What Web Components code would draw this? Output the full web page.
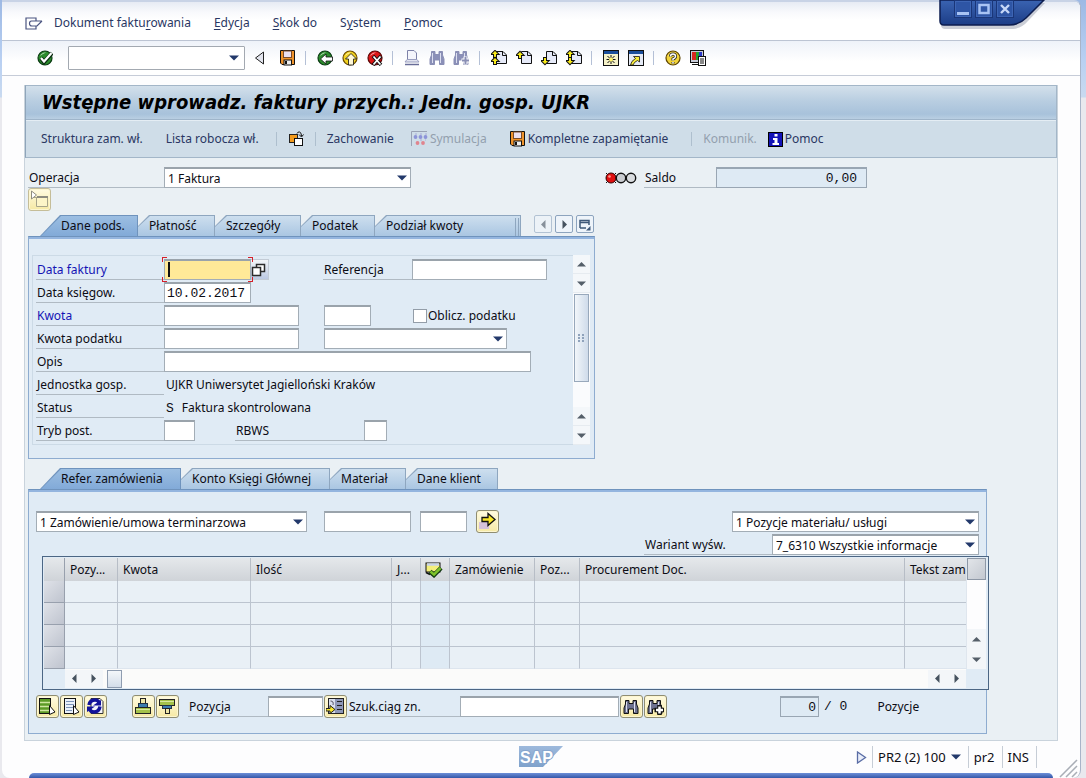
<!DOCTYPE html>
<html lang="pl">
<head>
<meta charset="utf-8">
<title>Wstępne wprowadz. faktury przych.</title>
<style>
  html, body { margin: 0; height: 100%; }
  body {
    font-family: "Noto Sans", "Open Sans", sans-serif;
    font-size: 12px;
    line-height: 20px;
    color: #0c0c14;
    background: linear-gradient(#9db9e4 0, #b9d0f2 60px, #c9daf0 97px, #e9e9ee 98px);
    --navy: #2a3763;
  }
</style>
</head>
<body>
<sap-window>
  <sap-window-controls slot="controls"></sap-window-controls>
  <sap-menubar slot="menu"></sap-menubar>
  <sap-toolbar slot="toolbar"></sap-toolbar>

  <sap-titlebar slot="title" heading="Wstępne wprowadz. faktury przych.: Jedn. gosp. UJKR"></sap-titlebar>

  <sap-operation></sap-operation>

  <sap-tabpanel class="header" overflow
      tabs="Dane pods.:98|Płatność:77|Szczegóły:86|Podatek:74|Podział kwoty:146">
    <sap-basic-data></sap-basic-data>
  </sap-tabpanel>

  <sap-tabpanel class="items"
      tabs="Refer. zamówienia:141|Konto Księgi Głównej:149|Materiał:76|Dane klient:92">
    <sap-items></sap-items>
  </sap-tabpanel>

  <sap-statusbar slot="status"></sap-statusbar>
</sap-window>

<script>
const page = `<path d="M5.500 8V1.500H12L15.500 5V13.500H5.500Z" fill="#e6eaf8" stroke="#111"/><path d="M11.500 1.500V5.500H15.500" fill="none" stroke="#111"/>`;
const arrow = d => `<path d="${d}" fill="#f8ea1a" stroke="#111" stroke-width="2" paint-order="stroke"/>`;
const up = y => arrow(`M4 ${y}L7 ${y+3}H5V${y+6}H3V${y+3}H1Z`);
const down = y => arrow(`M4 ${y+6}L7 ${y+3}H5V${y}H3V${y+3}H1Z`);
const binoc = (body, edge) => `<path d="M2.500 1.500H6V4.500H10V1.500H13.500V5L15 9V14.500H10.500V10H5.500V14.500H1V9L2.500 5Z" fill="${body}" stroke="${edge}"/><path d="M3.500 3V13M11.500 3V13" stroke="#dcdff0"/>`;
const disk = `<path d="M.5 .5H14.500V14.500H2L.5 13Z" fill="#f0932b" stroke="#111"/><rect x="3.500" y="1" width="8" height="6.500" fill="#eadff0" stroke="#7a4b28"/><rect x="4" y="10" width="7.500" height="5" fill="#eee" stroke="#111"/><rect x="5" y="11" width="2" height="3" fill="#111"/>`;
const ball = (c, d) => `<circle cx="8" cy="8" r="7" fill="${c}" stroke="${d}" stroke-width="1.200"/><path d="M3 6Q5 2 9 2.500Q5 4 3 6Z" fill="#fff" opacity=".7"/>`;
const ICONS = {
  menu: [18, 13, `<path d="M11 4.500V1H1V12H11V8.500M17 4H6.500Q4.500 4 4.500 6.500T7 9H12L17 4" fill="none" stroke="#4a5480" stroke-width="1.200"/>`],
  ok: [16, 16, ball('#2c8c2c', '#0a3a12') + `<path d="M4 8L7 12L15 3" fill="none" stroke="#0a2a10" stroke-width="4"/><path d="M4 8L7 11.500L14.500 3" fill="none" stroke="#fff" stroke-width="2.200"/>`],
  back: [16, 16, ball('#2c8c2c', '#0a3a12') + `<path d="M3.500 9L9 4V7H15.500V11H9V14Z" fill="#fff" stroke="#111" stroke-width=".8"/>`],
  exit: [16, 16, ball('#f2d21f', '#6b4a00') + `<path d="M9 3.500L14.500 9H11.500V15H6.500V9H3.500Z" fill="#fff8d8" stroke="#111" stroke-width=".8"/>`],
  cancel: [16, 16, ball('#dd1717', '#5a0505') + `<path d="M6 6L14 15M14 6L6 15" stroke="#111" stroke-width="3.400"/><path d="M6.500 6.500L13.500 14.500M13.500 6.500L6.500 14.500" stroke="#fff" stroke-width="1.800"/>`],
  prev: [11, 14, `<path d="M9.500 1V13L1.500 7Z" fill="#e3e5ee" stroke="#222"/>`],
  save: [16, 16, disk],
  print: [16, 16, `<path d="M3.500 9V.5H10L12.500 3V9" fill="#f4f5fb" stroke="#7d82a8"/><path d="M3 9.500H13L15 12H1Z" fill="#e2e4f0" stroke="#9a9fc0"/><path d="M1 14.500H15" stroke="#686d98" stroke-width="1.500"/>`],
  find: [16, 16, binoc('#8b90b8', '#8a8fb5')],
  findnext: [17, 16, binoc('#8b90b8', '#8a8fb5') + `<path d="M12.500 6.500V14.500M8.500 10.500H16.500" stroke="#fff" stroke-width="4"/><path d="M12.500 7V14M9 10.500H16" stroke="#8a8fb5" stroke-width="2"/>`],
  bfind: [17, 16, binoc('#6d7190', '#111')],
  bfindnext: [17, 16, binoc('#6d7190', '#111') + `<path d="M12.500 6V16M7.500 11H17" stroke="#111" stroke-width="4.500"/><path d="M12.500 7.500V14.500M9 11H16" stroke="#fff" stroke-width="2.500"/>`],
  first: [16, 16, page + up(1) + up(8)],
  pgup: [16, 16, page + up(2)],
  pgdn: [16, 16, page + down(8)],
  last: [16, 16, page + up(1) + down(8)],
  session: [16, 16, `<rect x=".5" y=".5" width="15" height="15" fill="#f6f2c8" stroke="#111"/><path d="M1 2.500H15" stroke="#1c4f9c" stroke-width="3"/><path d="M8 5V14M3.500 9.500H12.500M4.500 6L11.500 13M11.500 6L4.500 13" stroke="#111"/><circle cx="8" cy="9.500" r="2" fill="#fff36a"/>`],
  shortcut: [16, 16, `<rect x=".5" y=".5" width="15" height="15" fill="#e6ebf6" stroke="#111"/><path d="M1 2.500H15" stroke="#1c4f9c" stroke-width="3"/><path d="M5.500 6.500H11.500V12L9.500 10.500Q6 12 5 15H2.500Q3 11 7.500 8.500Z" fill="#f8ec3a" stroke="#111" stroke-width=".8"/>`],
  help: [16, 16, ball('#f2d43a', '#5c4300') + `<path d="M5.500 6.500Q5.500 4 8 4T10.500 6.500Q10.500 8 8 9V10.500M8 12V13.500" fill="none" stroke="#222" stroke-width="3"/><path d="M5.500 6.500Q5.500 4 8 4T10.500 6.500Q10.500 8 8 9V10.500M8 12V13.500" fill="none" stroke="#fff" stroke-width="1.500"/>`],
  layout: [16, 16, `<rect x=".5" y=".5" width="13" height="12" fill="#c8ccd8" stroke="#111"/><rect x="2" y="2" width="4" height="8" fill="#d8281e"/><rect x="6" y="2" width="3" height="8" fill="#25a02c"/><rect x="9" y="2" width="3" height="8" fill="#2a37c8"/><path d="M2 14.500H8" stroke="#111"/><rect x="8.500" y="6.500" width="7" height="9" fill="#fff" stroke="#111"/><path d="M10 9H14M10 11H14M10 13H14" stroke="#111"/>`],
  otherdoc: [16, 16, `<rect x="1.500" y="3.500" width="8" height="8" fill="#f29a1c" stroke="#222"/><rect x="6.500" y="7.500" width="8" height="7" fill="#fff" stroke="#111"/><path d="M9 2.500Q10 .5 11.500 1Q13.500 1.500 13.500 5M11 3.500L13.500 6L15.500 3.500" fill="none" stroke="#111"/>`],
  simulate: [17, 16, `<path d="M.5 15V.5H16" fill="none" stroke="#9aa2b5"/><g fill="#8d94d8"><circle cx="4.500" cy="6" r="1.900"/><circle cx="9.500" cy="6" r="1.900"/><circle cx="14.500" cy="6" r="1.900"/></g><g fill="#e0848e"><circle cx="6.500" cy="12" r="1.900"/><circle cx="12" cy="12" r="1.900"/></g><path d="M4 3H16M9 9H15" stroke="#a9add8" stroke-dasharray="2 3"/>`],
  info: [15, 15, `<rect x=".5" y=".5" width="14" height="14" fill="#1212b8" stroke="#000"/><path d="M6.500 2H9.500V4.500H6.500ZM5 6H9.500V11H11V13H4.500V11H6.500V8H5Z" fill="#fff"/>`],
  lights: [32, 16, `<path d="M1 8H11" stroke="#111" stroke-width="2"/><path d="M1 3L11 13M11 3L1 13" stroke="#111"/><circle cx="6" cy="8" r="5" fill="#e01010" stroke="#300"/><circle cx="4.500" cy="6.500" r="1.300" fill="#ff9a90"/><circle cx="16" cy="8" r="4.700" fill="#c9ccd0" stroke="#111" stroke-width="1.400"/><circle cx="26" cy="8" r="4.700" fill="#d9dcdf" stroke="#111" stroke-width="1.400"/>`],
  tree: [19, 19, `<path d="M1.500 1V9L6.500 5Z" fill="#fff" stroke="#8d8c80"/><path d="M4 7.500H17M6.500 7V16.500H17.500V7" fill="#fdf5c8" stroke="#a8a58a"/><path d="M7 7H18" stroke="#8d8c80" stroke-width="2"/>`],
  copyout: [19, 19, `<rect x="1" y="10" width="10" height="7" fill="#d5c2dc"/><path d="M4 5.500H10V1.500L17 7.500L10 13.500V9.500H4Z" fill="#f8e528" stroke="#111" stroke-width="1.300"/>`],
  values: [18, 18, `<path d="M5.500 3.500H13.500V10.500H5.500Z" fill="#fff" stroke="#2b2b2b" stroke-width="1.500"/><path d="M1.500 6.500H9.500V14.500H1.500Z" fill="#fff" stroke="#2b2b2b" stroke-width="1.500"/>`],
  selall: [19, 19, `<rect x="1.500" y="1.500" width="11" height="15" fill="#5c9a26" stroke="#111"/><path d="M2 5.500H12M2 9.500H12M2 13.500H12" stroke="#cfe6a0" stroke-width="1.500"/><path d="M11.500 8.500V17.500L17 15Z" fill="#fff" stroke="#111"/>`],
  deselall: [19, 19, `<rect x="2.500" y="1.500" width="11" height="15" fill="#eaf1fa" stroke="#111"/><path d="M4 4.500H12M4 7.500H12M4 10.500H12M4 13.500H10" stroke="#7d95b8"/><path d="M11.500 8.500V17.500L17 15Z" fill="#fff" stroke="#111"/>`],
  refresh: [19, 19, `<path d="M5 1.500H14L17 4.500V16.500H5Z" fill="#f4f4fa" stroke="#333"/><path d="M3 8Q4 3 9 3Q12 3 13 5.500M14 9.500Q13 15 8 15Q4.500 15 3.500 12" fill="none" stroke="#12129a" stroke-width="3.500"/><path d="M7 8.500H15V3ZM9 9.500H1V15Z" fill="#12129a"/>`],
  insert: [19, 19, `<rect x="6.500" y="1.500" width="5" height="5" fill="#eee7a8" stroke="#222"/><rect x="4.500" y="6.500" width="9" height="4" fill="#3a7cb0" stroke="#234"/><rect x="1.500" y="10.500" width="15" height="6" fill="#a4c24a" stroke="#222"/><path d="M2 12.500H16" stroke="#d9e8a0"/>`],
  remove: [19, 19, `<rect x="1.500" y="2.500" width="15" height="6" fill="#a4c24a" stroke="#222"/><path d="M2 4.500H16" stroke="#d9e8a0"/><rect x="4.500" y="8.500" width="9" height="3" fill="#3a7cb0" stroke="#234"/><rect x="7.500" y="11.500" width="4" height="5" fill="#eee7a8" stroke="#222"/>`],
  position: [19, 19, `<rect x="2.500" y="1.500" width="15" height="15" fill="#8d97b8" stroke="#222"/><rect x="3" y="2" width="6" height="14" fill="#d9dfee"/><path d="M11 4.500H16M11 8.500H16M11 12.500H16" stroke="#222"/><path d="M4.500 4Q8 4 7 8" fill="none" stroke="#556"/><path d="M0 11.500H4V8.500L9 12.500L4 16.500V14H0Z" fill="#f6e528" stroke="#222"/>`],
  status: [18, 16, `<rect x="1" y="1" width="14" height="9" fill="#f4ef7a" stroke="#111"/><path d="M2 2.500H14" stroke="#c9d3e8" stroke-width="2.500"/><path d="M1 10.500L5 12.500" stroke="#111" stroke-width="1.500"/><path d="M5 9.500L9 13L16 6" fill="none" stroke="#123a12" stroke-width="4.500"/><path d="M5.500 9.500L9 12.500L15.500 6" fill="none" stroke="#7cc22a" stroke-width="2.500"/>`],
  tabmenu: [12, 13, `<path d="M1 10V2.500H5M5 2.500H10V7M1 10H7M1 4.500H10" fill="none" stroke="#3e5878" stroke-width="1.500"/><path d="M7 12.500H11.500V8Z" fill="#3e5878"/>`],
  up: [9, 5, `<path d="M0 4.500L4.500 0L9 4.500Z" fill="#555f69"/>`],
  down: [9, 5, `<path d="M0 .5H9L4.500 5Z" fill="#555f69"/>`],
  left: [5, 9, `<path d="M4.500 0V9L0 4.500Z" fill="#46525f"/>`],
  right: [5, 9, `<path d="M.5 0V9L5 4.500Z" fill="#46525f"/>`],
  drop: [10, 6, `<path d="M0 .5H10L5 5.500Z" fill="#23396b"/>`],
  play: [11, 13, `<path d="M1.500 1V12L9.500 6.500Z" fill="#e9eefa" stroke="#5a6da5" stroke-width="1.300"/>`]
};

const base = `<style>
  *, *::before, *::after { box-sizing: border-box; }
  :host { display: block; }
  :host([hidden]) { display: none; }
  button, input, select { font: inherit; color: inherit; margin: 0; }
</style>`;

function define(name, render) {
  customElements.define(name, class extends HTMLElement {
    constructor() { super(); this.attachShadow({ mode: 'open' }); }
    connectedCallback() {
      if (this.shadowRoot.childNodes.length) return;
      const t = document.createElement('template');
      t.innerHTML = base + render(this, (n, d = '') => this.getAttribute(n) ?? d);
      this.shadowRoot.append(t.content.cloneNode(true));
    }
  });
}

define('sap-icon', (el, a) => {
  const [w, h, art] = ICONS[a('name')];
  return `<style>:host{display:inline-block;width:${w}px;height:${h}px;flex:none}svg{display:block}</style>
    <svg width="${w}" height="${h}" viewBox="0 0 ${w} ${h}" aria-hidden="true">${art}</svg>`;
});

/* Square yellow push button */
define('sap-push', (el, a) => `<style>
  :host { width: 23px; height: 23px; flex: none; }
  button { display: flex; align-items: center; justify-content: center; width: 100%; height: 100%; padding: 0;
    border: 1px solid #8f8d72; border-radius: 3px; background: linear-gradient(#fffbe2, #f6e9a4);
    box-shadow: inset 0 0 0 1px #fdf6cf; }
  :host([dim]) button { border-color: #c5bd98; }
  </style><button type="button" aria-label="${a('label')}"><sap-icon name="${a('icon')}"></sap-icon></button>`);

/* Label with underline, and its input, list or output */
define('sap-field', (el, a) => {
  const kind = a('kind', 'input');
  const label = a('label');
  const aria = label ? '' : `aria-label="${a('hint')}"`;
  let control = '';
  if (kind === 'select') {
    control = `<span class="box"><select id="c" ${aria}><option>${a('value')}</option></select><sap-icon name="drop"></sap-icon></span>`;
  } else if (kind === 'output') {
    control = `<output id="c"><slot></slot></output>`;
  } else {
    control = `<span class="box"><input id="c" ${aria} type="text" value="${a('value')}" ${el.hasAttribute('readonly') ? 'readonly' : ''}>${el.hasAttribute('focused') ? '<i class="caret"></i><i class="mark"></i>' : ''}</span>`;
  }
  return `<style>
    :host { display: flex; height: 21px; flex: none; }
    label { width: ${a('lw', 0)}px; flex: none; border-bottom: 1px solid #b0bac3; padding: 1px 0 0 1px; white-space: nowrap; }
    :host([required]) label { color: #1414b4; }
    .box { position: relative; display: block; width: ${a('w', 100)}px; flex: none; }
    input, select { display: block; width: 100%; height: 21px; border: 1px solid #a3adb6; border-top: 2px solid #9aa3ab;
      border-radius: 0; background: #fff; padding: 0 2px; outline: 0; appearance: none; }
    select { padding: 0 20px 0 3px; }
    input { font: 13px/18px "Liberation Mono", monospace; }
    :host([readonly]) input { background: #deeaf4; text-align: right; padding-right: 9px; border-color: #99a6b3; }
    :host([tight]) input { padding-right: 2px; }
    :host([focused]) input { background: #ffe998; }
    .box sap-icon { position: absolute; right: 4px; top: 8px; }
    .caret { position: absolute; left: 4px; top: 3px; width: 2px; height: 15px; background: #111; }
    .mark { position: absolute; inset: -2px; 
      --r: #d6202a;
      background:
        linear-gradient(var(--r),var(--r)) 0 0/5px 1px, linear-gradient(var(--r),var(--r)) 0 0/1px 5px,
        linear-gradient(var(--r),var(--r)) 100% 0/5px 1px, linear-gradient(var(--r),var(--r)) 100% 0/1px 5px,
        linear-gradient(var(--r),var(--r)) 0 100%/5px 1px, linear-gradient(var(--r),var(--r)) 0 100%/1px 5px,
        linear-gradient(var(--r),var(--r)) 100% 100%/5px 1px, linear-gradient(var(--r),var(--r)) 100% 100%/1px 5px;
      background-repeat: no-repeat; pointer-events: none; }
    output { padding: 1px 0 0 2px; white-space: pre; }
  </style>${label ? `<label for="c">${label}</label>` : ''}${control}`;
});

define('sap-window', () => `<style>
  :host { position: relative; display: flex; flex-direction: column; min-height: 100vh; padding: 0 5px 0 2px; }
  .frame { flex: 1; display: flex; flex-direction: column; background: #fdfdfe; border-top: 2px solid #c8d3e6; border-right: 1px solid #a9b4c8; border-radius: 0 7px 8px 8px; }
  main { flex: 1; margin: 9px 22px 0 22px; background: #eaf0f4; border: 1px solid #c9d3dc; border-top: 0; }
  .work { padding: 9px 0 6px 3px; }
  .base { height: 5px; margin: 0 27px; border-radius: 12px 12px 0 0; background: linear-gradient(#6d8fd8, #3457a8); flex: none; }
  </style>
  <slot name="controls"></slot>
  <div class="frame"><slot name="menu"></slot><slot name="toolbar"></slot>
    <main><slot name="title"></slot><div class="work"><slot></slot></div></main>
    <slot name="status"></slot><div class="base"></div></div>`);

define('sap-window-controls', () => `<style>
  :host { position: absolute; top: 0; right: 40px; width: 107px; height: 32px; }
  .shape { position: absolute; inset: 0; }
  div { position: relative; display: flex; gap: 3px; padding: 0 0 0 15px; }
  button { width: 18px; height: 18px; padding: 0; border: 1px solid #1a3678; background: #2e55a5; box-shadow: inset 0 0 0 1px #3d65b4; display: flex; align-items: center; justify-content: center; }
  button svg { display: block; }
  </style>
  <svg class="shape" width="107" height="32" viewBox="0 0 107 32" aria-hidden="true">
    <defs><linearGradient id="g" x2="0" y2="1"><stop stop-color="#3a63b2"/><stop offset="1" stop-color="#1c3d86"/></linearGradient></defs>
    <path d="M2 3V26Q3 29 6 29H74Q83 28 89 21L106 3Z" fill="#8b93a5" opacity=".45"/>
    <path d="M1 0V21Q1 25 5 25H70Q80 25 87 18L105 0Z" fill="url(#g)" stroke="#0c1d50" stroke-width="1.500"/></svg>
  <div>
    <button type="button" aria-label="Minimalizuj"><svg width="12" height="12"><path d="M0 10.500H12" stroke="#a9c4f4" stroke-width="3"/></svg></button>
    <button type="button" aria-label="Maksymalizuj"><svg width="12" height="12"><rect x="1.500" y="2" width="9" height="8" fill="none" stroke="#a9c4f4" stroke-width="2.500"/></svg></button>
    <button type="button" aria-label="Zamknij"><svg width="12" height="12"><path d="M2 2L10 10M10 2L2 10" stroke="#c7d8f8" stroke-width="2.400"/></svg></button>
  </div>`);

define('sap-menubar', () => `<style>
  :host { border-bottom: 1px solid #bcc4d3; background: linear-gradient(#e6ebf4 0, #f8f9fc 10px, #fff 18px); border-radius: 0 5px 0 0; }
  nav { display: flex; align-items: center; height: 38px; padding: 4px 0 0 23px; color: var(--navy); gap: 23px; }
  button { border: 0; padding: 0; background: none; white-space: nowrap; }
  .first { margin-left: -12px; }
  u { text-underline-offset: 2px; }
  </style><nav aria-label="Menu"><sap-icon name="menu"></sap-icon>
  <button type="button" class="first">Dokument faktu<u>r</u>owania</button>
  <button type="button"><u>E</u>dycja</button><button type="button"><u>S</u>kok do</button>
  <button type="button">S<u>y</u>stem</button><button type="button"><u>P</u>omoc</button></nav>`);

define('sap-toolbar', () => {
  const b = (i, t) => `<button type="button" aria-label="${t}"><sap-icon name="${i}"></sap-icon></button>`;
  return `<style>
  :host { border-bottom: 1px solid #c6ccd8; background: linear-gradient(#eef2f9, #fff 60%); }
  div { display: flex; align-items: center; height: 34px; padding-left: 30px; }
  button { width: 25px; height: 24px; flex: none; display: flex; align-items: center; justify-content: center; border: 0; padding: 0; background: none; }
  .cmd { position: relative; width: 177px; height: 24px; margin: 0 2px 0 11px; flex: none; }
  .cmd input { width: 100%; height: 100%; border: 1px solid #a3a9b1; border-radius: 1px; background: #fff; padding: 0 24px 0 4px; outline: 0; }
  .cmd button { position: absolute; right: 0; top: 0; width: 22px; }
  .s { width: 1px; height: 14px; margin: 0 6px 0 5px; background: #b4c0d6; flex: none; }
  .wide { margin-right: 3px; }
  </style><div role="toolbar" aria-label="Standard">${b('ok', 'Enter')}
  <span class="cmd"><input type="text" aria-label="Polecenie">${b('drop', 'Historia')}</span>
  ${b('prev', 'Zwiń').replace('<button', '<button class="wide"')}${b('save', 'Zapis')}<i class="s"></i>
  ${b('back', 'Wstecz')}${b('exit', 'Koniec')}${b('cancel', 'Anulowanie')}<i class="s"></i>
  ${b('print', 'Wydruk')}${b('find', 'Szukanie')}${b('findnext', 'Szukanie dalej')}<i class="s"></i>
  ${b('first', 'Pierwsza strona')}${b('pgup', 'Poprzednia strona')}${b('pgdn', 'Następna strona')}${b('last', 'Ostatnia strona')}<i class="s"></i>
  ${b('session', 'Nowy tryb')}${b('shortcut', 'Skrót')}<i class="s"></i>
  ${b('help', 'Pomoc')}${b('layout', 'Układ lokalny')}</div>`;
});

define('sap-titlebar', (el, a) => `<style>
  :host { border: 1px solid #a3b6c8; border-left-color: #8fa5ba; }
  h1 { margin: 0; height: 34px; padding-left: 16px; font: italic bold 20px/32px "DejaVu Sans Condensed", "Noto Sans", sans-serif; color: #000;
    background: linear-gradient(#d3e0eb, #b9cee1 45%, #a8c2db 85%, #b9cfe2); border-bottom: 1px solid #9fb5ca; white-space: nowrap; }
  div { display: flex; align-items: center; height: 37px; padding-left: 15px; background: #cfdde8; border-top: 1px solid #e4edf4; color: var(--navy); }
  button { display: flex; align-items: center; gap: 2px; border: 0; padding: 0; margin-right: 23px; background: none; white-space: nowrap; height: 24px; }
  button[disabled] { color: #93a0ae; }
  .n { margin-right: 17px; }
  .t { margin-right: 11px; }
  i { width: 1px; height: 14px; background: #aebfce; margin-right: 11px; flex: none; }
  </style><h1>${a('heading')}</h1>
  <div role="toolbar" aria-label="Aplikacja">
   <button type="button">Struktura zam. wł.</button><button type="button" class="n">Lista robocza wł.</button><i></i>
   <button type="button" class="t" aria-label="Inny dokument"><sap-icon name="otherdoc"></sap-icon></button><i></i>
   <button type="button" class="n">Zachowanie</button>
   <button type="button" disabled><sap-icon name="simulate"></sap-icon>Symulacja</button>
   <button type="button"><sap-icon name="save"></sap-icon>Kompletne zapamiętanie</button><i></i>
   <button type="button" class="t" disabled>Komunik.</button>
   <button type="button"><sap-icon name="info"></sap-icon>Pomoc</button></div>`);

define('sap-operation', () => `<style>
  .row { display: flex; align-items: center; }
  .op { margin-right: 194px; }
  .bal { margin-left: 7px; }
  </style><div class="row"><sap-field class="op" kind="select" label="Operacja" lw="136" w="247" value="1 Faktura"></sap-field>
  <sap-icon name="lights"></sap-icon><sap-field class="bal" label="Saldo" lw="72" w="151" value="0,00" readonly></sap-field></div>
  <sap-push icon="tree" label="Struktura" dim></sap-push>`);

define('sap-tabpanel', (el, a) => {
  const tabs = a('tabs').split('|').map((t, i) => {
    const [n, w] = t.split(':');
    return `<button type="button" role="tab" aria-selected="${i === 0}" style="width:${w}px"><span>${n}</span></button>`;
  }).join('');
  return `<style>
  :host(.header) { width: 567px; margin-top: 4px; }
  :host(.items) { margin: 9px 70px 0 0; }
  .tabs { display: flex; height: 21px; padding-left: 12px; }
  .tabs button { position: relative; height: 21px; border: 0; padding: 0 0 0 11px; text-align: left; white-space: nowrap; flex: none;
    background: #8ea6bf; clip-path: polygon(0 100%, 0 11px, 11px 0, 100% 0, 100% 100%); }
  .tabs button::before { content: ""; position: absolute; inset: 0; background: linear-gradient(#cfe0ef, #aac6e2);
    clip-path: polygon(0 100%, 0 12px, 12px 1px, calc(100% - 1px) 1px, calc(100% - 1px) 100%); }
  .tabs button[aria-selected=true] { padding-left: 21px; background: #6f93bd; clip-path: polygon(0 100%, 20px 0, 100% 0, 100% 100%); }
  .tabs button[aria-selected=true]::before { background: linear-gradient(#9dbfe2, #82aad8); clip-path: polygon(1px 100%, 21px 1px, calc(100% - 1px) 1px, calc(100% - 1px) 100%); }
  .tabs span { position: relative; line-height: 22px; }
  :host([overflow]) .tabs button:nth-child(5)::after { content: ""; position: absolute; right: 2px; top: 3px; bottom: 0; width: 4px; border: solid #8ea6bf; border-width: 0 1px; }
  .nav { display: flex; gap: 3px; margin-left: 13px; }
  .tabs .nav button { width: 18px; height: 18px; padding: 0; display: flex; align-items: center; justify-content: center; background: #eef4fa; border: 1px solid #8da4be; border-radius: 2px; clip-path: none; }
  .tabs .nav button::before { content: none; }
  .tabs .nav button:first-child { opacity: .6; }
  .body { border: 1px solid #8eacd0; border-top: 1px solid #6f93bd; background: #e0ebf5; box-shadow: inset 0 2px #94b5df; }
  </style><div class="tabs" role="tablist">${tabs}${el.hasAttribute('overflow') ? `<div class="nav">
    <button type="button" aria-label="W lewo"><sap-icon name="left"></sap-icon></button><button type="button" aria-label="W prawo"><sap-icon name="right"></sap-icon></button>
    <button type="button" aria-label="Lista kart"><sap-icon name="tabmenu"></sap-icon></button></div>` : ''}</div>
  <div class="body"><slot></slot></div>`;
});

define('sap-basic-data', () => `<style>
  :host { display: flex; padding: 18px 4px 13px 3px; }
  form { flex: 1; border: solid #ccdae6; border-width: 1px 0 1px 1px; padding: 3px 0 3px 3px; display: grid; grid-auto-rows: 21px; row-gap: 2px; }
  .r { display: flex; }
  .help { width: 18px; padding: 0; border: 1px solid #c3cbd5; border-left: 0; background: linear-gradient(#f2f5f8, #bcc9e2); display: block; }
  .help sap-icon { display: block; }
  .ref { margin-left: 54px; } .g { margin-left: 25px; }
  .chk { display: flex; align-items: center; margin-left: 42px; gap: 1px; }
  .chk input { appearance: none; width: 14px; height: 14px; border: 1px solid #939da8; background: #fff; }
  .rb { margin-left: 40px; }
  .m { font: 13px "Liberation Mono", monospace; margin-right: 8px; }
  .bar { width: 17px; display: flex; flex-direction: column; background: #fafbfd; }
  .bar button { height: 19px; padding: 0; border: 0; border-bottom: 1px solid #e6ebf0; background: #f4f7fa; display: flex; align-items: center; justify-content: center; flex: none; }
  .thumb { height: 88px; margin: 1px; border: 1px solid #98a8bb; background: linear-gradient(90deg, #f2f6fa, #cfdbea); display: flex; align-items: center; justify-content: center; }
  .grip { width: 7px; height: 8px; background: radial-gradient(circle at 1px 1px, #8fa2bb 1px, transparent 1px) 0 0/4px 3px; }
  .gap { flex: 1; }
  </style><form>
   <div class="r"><sap-field required focused label="Data faktury" lw="128" w="87"></sap-field><button type="button" class="help" aria-label="Wybór daty"><sap-icon name="values"></sap-icon></button>
     <sap-field class="ref" label="Referencja" lw="89" w="135"></sap-field></div>
   <div class="r"><sap-field label="Data księgow." lw="128" w="87" value="10.02.2017"></sap-field></div>
   <div class="r"><sap-field required label="Kwota" lw="128" w="135"></sap-field><sap-field class="g" hint="Waluta" w="47"></sap-field>
     <label class="chk"><input type="checkbox">Oblicz. podatku</label></div>
   <div class="r"><sap-field label="Kwota podatku" lw="128" w="135"></sap-field><sap-field class="g" kind="select" hint="Kod podatku" w="183"></sap-field></div>
   <div class="r"><sap-field label="Opis" lw="128" w="367"></sap-field></div>
   <div class="r"><sap-field kind="output" label="Jednostka gosp." lw="128">UJKR Uniwersytet Jagielloński Kraków</sap-field></div>
   <div class="r"><sap-field kind="output" label="Status" lw="128"><span class="m">S</span>Faktura skontrolowana</sap-field></div>
   <div class="r"><sap-field label="Tryb post." lw="128" w="31"></sap-field><sap-field class="rb" label="RBWS" lw="129" w="23"></sap-field></div>
  </form>
  <div class="bar"><button type="button" aria-label="W górę"><sap-icon name="up"></sap-icon></button><button type="button" aria-label="W dół"><sap-icon name="down"></sap-icon></button>
    <div class="thumb"><div class="grip"></div></div><div class="gap"></div>
    <button type="button" aria-label="W górę"><sap-icon name="up"></sap-icon></button><button type="button" aria-label="W dół"><sap-icon name="down"></sap-icon></button></div>`);

define('sap-items', () => `<style>
  :host { padding: 21px 7px 15px; }
  .top { display: flex; align-items: flex-start; height: 21px; }
  .a { margin-left: 17px; } .b { margin: 0 9px; }
  .end { margin-left: auto; }
  .second { display: flex; justify-content: flex-end; margin: 2px 0 1px; }
  sap-grid { margin: 0 -10px 0 6px; }
  .foot { display: flex; align-items: center; gap: 1px; margin-top: 5px; }
  .c { margin-left: 24px; } .l { margin-left: 8px; }
  .n { margin-left: 112px; }
  .tot { font: 13px/20px "Liberation Mono", monospace; white-space: pre; margin-left: 4px; }
  .p { margin-left: 29px; }
  .top sap-push { margin-top: -1px; }
  </style>
  <div class="top"><sap-field kind="select" hint="Odniesienie" w="271" value="1 Zamówienie/umowa terminarzowa"></sap-field>
    <sap-field class="a" hint="Zamówienie" w="87"></sap-field><sap-field class="b" hint="Pozycja zamówienia" w="47"></sap-field>
    <sap-push icon="copyout" label="Dalsze zamówienia"></sap-push>
    <sap-field class="end" kind="select" hint="Pozycje" w="247" value="1 Pozycje materiału/ usługi"></sap-field></div>
  <div class="second"><sap-field kind="select" label="Wariant wyśw." lw="128" w="207" value="7_6310 Wszystkie informacje"></sap-field></div>
  <sap-grid></sap-grid>
  <div class="foot"><sap-push icon="selall" label="Zaznacz wszystko"></sap-push><sap-push icon="deselall" label="Usuń zaznaczenie"></sap-push><sap-push icon="refresh" label="Odśwież"></sap-push>
    <sap-push class="c" icon="insert" label="Wstaw"></sap-push><sap-push icon="remove" label="Usuń"></sap-push>
    <sap-field class="l" label="Pozycja" lw="80" w="55"></sap-field><sap-push icon="position" label="Pozycjonuj"></sap-push>
    <sap-field label="Szuk.ciąg zn." lw="112" w="159"></sap-field><sap-push icon="bfind" label="Szukaj"></sap-push><sap-push icon="bfindnext" label="Szukaj dalej"></sap-push>
    <sap-field class="n" hint="Wiersz" w="39" value="0" readonly tight></sap-field><span class="tot">/ 0</span><span class="p">Pozycje</span></div>`);

define('sap-grid', () => {
  const heads = ['Pozy...', 'Kwota', 'Ilość', 'J...', '<sap-icon name="status"></sap-icon>', 'Zamówienie', 'Poz...', 'Procurement Doc.', 'Tekst zam'];
  const widths = [53, 133, 141, 29, 29, 85, 45, 0, 61];
  return `<style>
  :host { border: 1px solid #4c6684; padding: 1px 2px 0 1px; background: #e0ebf5; }
  .main { display: flex; }
  table { flex: 1; width: 100%; table-layout: fixed; border-collapse: separate; border-spacing: 0; }
  th { height: 23px; padding: 1px 0 0 5px; text-align: left; font-weight: normal; overflow: hidden; white-space: nowrap; line-height: 20px;
    border-right: 1px solid #b7bdc6; background: linear-gradient(#e5e8eb, #cfd3d8); }
  th sap-icon { display: block; margin-left: -1px; }
  td { height: 22px; padding: 0; border-right: 1px solid #bcc4cf; border-bottom: 1px solid #bcc4cf; background: #e9f0f6; }
  tr:last-child td { border-bottom-color: #dde5ee; }
  td:nth-child(6) { background: #deeaf4; }
  td:last-child, th:last-child { border-right: 0; }
  td:first-child, tr:last-child td:first-child { border-color: #98a0ad; background: linear-gradient(135deg, #dfe2e8, #bfc4cf); }
  th:first-child { border-right-color: #98a0ad; }
  .v { width: 20px; display: flex; flex-direction: column; background: #fdfdfe; border-left: 1px solid #dfe6ee; }
  .cfg { width: 19px; height: 22px; padding: 0; border: 1px solid #8d97a5; background: linear-gradient(135deg, #e2e5e9, #c3c8d0); }
  .gap { flex: 1; }
  .a { width: 19px; height: 20px; padding: 0; border: 0; background: #f3f6f9; display: flex; align-items: center; justify-content: center; flex: none; }
  .h { display: flex; height: 19px; margin: 0 20px 1px 21px; background: #fbfbfa; align-items: center; }
  .h .a { height: 18px; }
  .th { width: 15px; height: 18px; border: 1px solid #8f9db0; background: linear-gradient(#f4f7fa, #d3dde9); margin-left: 4px; }
  </style><div class="main"><table><colgroup><col style="width:21px">${widths.map(w => `<col${w ? ` style="width:${w}px"` : ''}>`).join('')}</colgroup>
  <thead><tr><th aria-label="Zaznaczenie"></th>${heads.map(h => `<th>${h}</th>`).join('')}</tr></thead>
  <tbody>${`<tr>${'<td></td>'.repeat(10)}</tr>`.repeat(4)}</tbody></table>
  <div class="v"><button type="button" class="cfg" aria-label="Konfiguracja"></button><div class="gap"></div>
   <button type="button" class="a" aria-label="W górę"><sap-icon name="up"></sap-icon></button><button type="button" class="a" aria-label="W dół"><sap-icon name="down"></sap-icon></button></div></div>
  <div class="h"><button type="button" class="a" aria-label="W lewo"><sap-icon name="left"></sap-icon></button><button type="button" class="a" aria-label="W prawo"><sap-icon name="right"></sap-icon></button>
   <div class="th"></div><div class="gap"></div>
   <button type="button" class="a" aria-label="W lewo"><sap-icon name="left"></sap-icon></button><button type="button" class="a" aria-label="W prawo"><sap-icon name="right"></sap-icon></button></div>`;
});

define('sap-statusbar', () => `<style>
  :host { position: relative; display: flex; align-items: center; height: 32px; }
  .logo { margin-right: auto; padding-left: 48%; height: 22px; }
  .logo svg { display: block; }
  .logo text { font: bold 16px "Liberation Sans", sans-serif; fill: #fff; stroke: #86a6ce; stroke-width: 2px; paint-order: stroke; }
  .s { display: flex; align-items: center; gap: 5px; height: 22px; border-right: 1px solid #c6cdd6; padding: 0 7px 0 5px; font-size: 13px; white-space: nowrap; }
  button { border: 0; padding: 0; background: none; display: flex; align-items: center; gap: 5px; }
  .s.go { padding: 0 5px 0 0; }
  .end { margin-right: 43px; }
  .grip { position: absolute; right: 2px; bottom: -5px; }
  </style>
  <div class="logo"><svg width="44" height="22" viewBox="0 0 44 22" role="img" aria-label="SAP"><defs><linearGradient id="l" x2="0" y2="1"><stop stop-color="#9db9dc"/><stop offset="1" stop-color="#7fa2cc"/></linearGradient></defs>
    <path d="M0 0H44L24 21H0Z" fill="url(#l)"/><text x="1" y="17">SAP</text></svg></div>
  <div class="s go"><button type="button" aria-label="Rozwiń"><sap-icon name="play"></sap-icon></button></div>
  <div class="s"><button type="button">PR2 (2) 100<sap-icon name="drop"></sap-icon></button></div>
  <div class="s">pr2</div><div class="s end">INS</div>
  <svg class="grip" width="20" height="20" aria-hidden="true"><path d="M2 19L19 2M8 19L19 8M14 19L19 14" stroke="#a9aeb6" stroke-width="1.500"/></svg>`);
</script>
</body>
</html>
